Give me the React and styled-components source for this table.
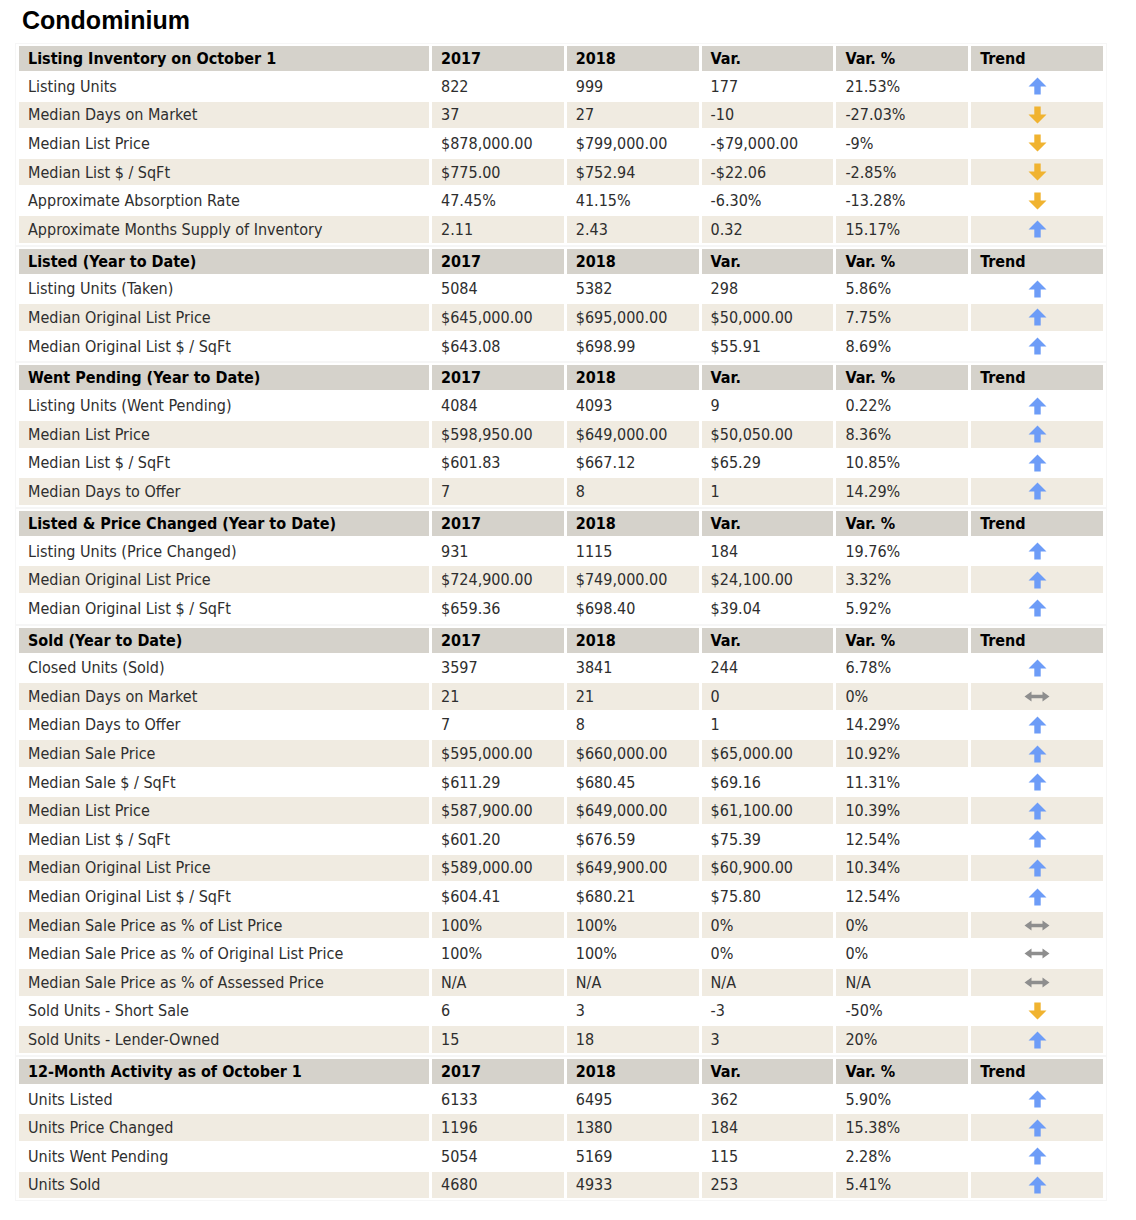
import React from "react";
import styled, { createGlobalStyle } from "styled-components";

const GlobalStyle = createGlobalStyle`
  body {
    margin: 0;
    background: #ffffff;
  }
`;

const sections = [
  {
    title: "Listing Inventory on October 1",
    rows: [
      ["Listing Units", "822", "999", "177", "21.53%", "up"],
      ["Median Days on Market", "37", "27", "-10", "-27.03%", "down"],
      ["Median List Price", "$878,000.00", "$799,000.00", "-$79,000.00", "-9%", "down"],
      ["Median List $ / SqFt", "$775.00", "$752.94", "-$22.06", "-2.85%", "down"],
      ["Approximate Absorption Rate", "47.45%", "41.15%", "-6.30%", "-13.28%", "down"],
      ["Approximate Months Supply of Inventory", "2.11", "2.43", "0.32", "15.17%", "up"],
    ],
  },
  {
    title: "Listed (Year to Date)",
    rows: [
      ["Listing Units (Taken)", "5084", "5382", "298", "5.86%", "up"],
      ["Median Original List Price", "$645,000.00", "$695,000.00", "$50,000.00", "7.75%", "up"],
      ["Median Original List $ / SqFt", "$643.08", "$698.99", "$55.91", "8.69%", "up"],
    ],
  },
  {
    title: "Went Pending (Year to Date)",
    rows: [
      ["Listing Units (Went Pending)", "4084", "4093", "9", "0.22%", "up"],
      ["Median List Price", "$598,950.00", "$649,000.00", "$50,050.00", "8.36%", "up"],
      ["Median List $ / SqFt", "$601.83", "$667.12", "$65.29", "10.85%", "up"],
      ["Median Days to Offer", "7", "8", "1", "14.29%", "up"],
    ],
  },
  {
    title: "Listed & Price Changed (Year to Date)",
    rows: [
      ["Listing Units (Price Changed)", "931", "1115", "184", "19.76%", "up"],
      ["Median Original List Price", "$724,900.00", "$749,000.00", "$24,100.00", "3.32%", "up"],
      ["Median Original List $ / SqFt", "$659.36", "$698.40", "$39.04", "5.92%", "up"],
    ],
  },
  {
    title: "Sold (Year to Date)",
    rows: [
      ["Closed Units (Sold)", "3597", "3841", "244", "6.78%", "up"],
      ["Median Days on Market", "21", "21", "0", "0%", "flat"],
      ["Median Days to Offer", "7", "8", "1", "14.29%", "up"],
      ["Median Sale Price", "$595,000.00", "$660,000.00", "$65,000.00", "10.92%", "up"],
      ["Median Sale $ / SqFt", "$611.29", "$680.45", "$69.16", "11.31%", "up"],
      ["Median List Price", "$587,900.00", "$649,000.00", "$61,100.00", "10.39%", "up"],
      ["Median List $ / SqFt", "$601.20", "$676.59", "$75.39", "12.54%", "up"],
      ["Median Original List Price", "$589,000.00", "$649,900.00", "$60,900.00", "10.34%", "up"],
      ["Median Original List $ / SqFt", "$604.41", "$680.21", "$75.80", "12.54%", "up"],
      ["Median Sale Price as % of List Price", "100%", "100%", "0%", "0%", "flat"],
      ["Median Sale Price as % of Original List Price", "100%", "100%", "0%", "0%", "flat"],
      ["Median Sale Price as % of Assessed Price", "N/A", "N/A", "N/A", "N/A", "flat"],
      ["Sold Units - Short Sale", "6", "3", "-3", "-50%", "down"],
      ["Sold Units - Lender-Owned", "15", "18", "3", "20%", "up"],
    ],
  },
  {
    title: "12-Month Activity as of October 1",
    rows: [
      ["Units Listed", "6133", "6495", "362", "5.90%", "up"],
      ["Units Price Changed", "1196", "1380", "184", "15.38%", "up"],
      ["Units Went Pending", "5054", "5169", "115", "2.28%", "up"],
      ["Units Sold", "4680", "4933", "253", "5.41%", "up"],
    ],
  },
];

const Page = styled.div`
  padding: 6px 0 16px 15px;
  font-family: "DejaVu Sans Condensed", "DejaVu Sans", Verdana, sans-serif;
`;

const Title = styled.h1`
  margin: 0 0 9px 7px;
  font-family: "Liberation Sans", Arial, sans-serif;
  font-size: 25px;
  line-height: 28px;
  font-weight: 700;
  color: #000;
`;

const Table = styled.table`
  width: 1092px;
  border-collapse: separate;
  border-spacing: 3px 2px;
  border: 1px solid #f6f6f6;
  margin-bottom: 0;
  table-layout: fixed;
`;

const HeadCell = styled.th`
  box-sizing: border-box;
  height: 25px;
  padding: 0 9px;
  background: #d5d2cb;
  color: #000;
  font-size: 16px;
  font-weight: 700;
  text-align: left;
  white-space: nowrap;
  width: ${(p) => (p.$wide ? "410px" : "auto")};
`;

const Cell = styled.td`
  height: 26.6px;
  padding: 0 9px;
  background: ${(p) => (p.$alt ? "#f0ebe1" : "#ffffff")};
  color: #2e2e2e;
  font-size: 16px;
  white-space: nowrap;
`;

const TrendCell = styled(Cell)`
  text-align: center;
  line-height: 0;
`;

const Arrow = styled.svg`
  display: inline-block;
  vertical-align: middle;
`;

function TrendIcon({ dir }) {
  if (dir === "flat") {
    return (
      <Arrow width="26" height="11" viewBox="0 0 26 11">
        <path d="M0.5 5.5 L7.5 0.5 V3.7 H18.5 V0.5 L25.5 5.5 L18.5 10.5 V7.3 H7.5 V10.5 Z" fill="#8e8e8e" />
      </Arrow>
    );
  }
  if (dir === "down") {
    return (
      <Arrow width="19" height="18" viewBox="0 0 19 18">
        <path d="M6.3 0.5 H12.7 V8.5 H18.5 L9.5 17.5 L0.5 8.5 H6.3 Z" fill="#f0b330" />
      </Arrow>
    );
  }
  return (
    <Arrow width="19" height="18" viewBox="0 0 19 18">
      <path d="M9.5 0.5 L18.5 9.5 H12.7 V17.5 H6.3 V9.5 H0.5 Z" fill="#6d9cf7" />
    </Arrow>
  );
}

function Section({ title, rows }) {
  return (
    <Table>
      <thead>
        <tr>
          <HeadCell $wide>{title}</HeadCell>
          <HeadCell>2017</HeadCell>
          <HeadCell>2018</HeadCell>
          <HeadCell>Var.</HeadCell>
          <HeadCell>Var. %</HeadCell>
          <HeadCell>Trend</HeadCell>
        </tr>
      </thead>
      <tbody>
        {rows.map((r, i) => (
          <tr key={i}>
            {r.slice(0, 5).map((v, j) => (
              <Cell key={j} $alt={i % 2 === 1}>
                {v}
              </Cell>
            ))}
            <TrendCell $alt={i % 2 === 1}>
              <TrendIcon dir={r[5]} />
            </TrendCell>
          </tr>
        ))}
      </tbody>
    </Table>
  );
}

export default function App() {
  return (
    <Page>
      <GlobalStyle />
      <Title>Condominium</Title>
      {sections.map((s) => (
        <Section key={s.title} title={s.title} rows={s.rows} />
      ))}
    </Page>
  );
}
